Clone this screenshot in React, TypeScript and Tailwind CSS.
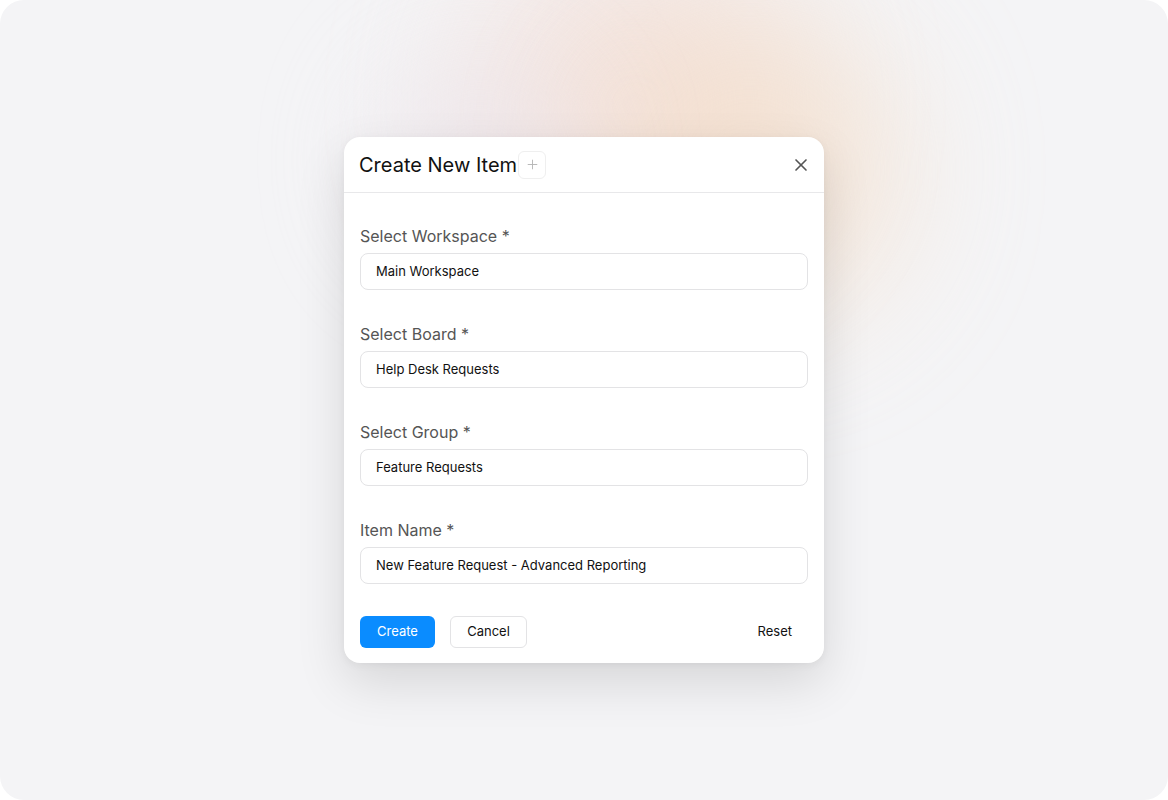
import { Plus, X } from 'lucide-react'

const FIELDS = [
  { label: 'Select Workspace *', value: 'Main Workspace' },
  { label: 'Select Board *', value: 'Help Desk Requests' },
  { label: 'Select Group *', value: 'Feature Requests' },
  { label: 'Item Name *', value: 'New Feature Request - Advanced Reporting' },
] as const

export default function App() {
  return (
    <div className="h-[800px] w-[1168px] bg-white font-['Inter',sans-serif]">
      <div className="relative flex h-full w-full items-start justify-center overflow-hidden rounded-[24px] bg-[#f4f4f6]">
        {/* soft glow behind the dialog */}
        <div className="pointer-events-none absolute left-[470px] top-[-60px] h-[330px] w-[330px] rounded-full bg-[#f3d9cf] opacity-60 blur-[70px]" />
        <div className="pointer-events-none absolute left-[600px] top-[20px] h-[300px] w-[300px] rounded-full bg-[#f4dcc4] opacity-60 blur-[70px]" />
        <div className="pointer-events-none absolute left-[380px] top-[60px] h-[200px] w-[200px] rounded-full bg-[#ebe3ea] opacity-60 blur-[60px]" />

        <div className="relative mt-[137px] w-[480px] rounded-2xl bg-white shadow-[0_20px_50px_rgba(0,0,0,0.12),0_2px_8px_rgba(0,0,0,0.05)]">
          <header className="flex h-[56px] items-center justify-between border-b border-[#e8e8ea] pl-[15px] pr-[11px]">
            <div className="flex items-center gap-[1px]">
              <h2 className="text-[20px] font-normal text-[#111]">Create New Item</h2>
              <span className="flex h-[28px] w-[28px] items-center justify-center rounded-md border border-[#efefef]">
                <Plus className="h-[15px] w-[15px] text-[#b5b5b5]" strokeWidth={1.5} />
              </span>
            </div>
            <button type="button" aria-label="Close" className="flex h-6 w-6 items-center justify-center text-[#555]">
              <X className="h-[20px] w-[20px]" strokeWidth={2} />
            </button>
          </header>

          <div className="px-4 pb-[15px] pt-[31px]">
            {FIELDS.map((field) => (
              <div key={field.label} className="mb-[32px]">
                <label className="mb-[5px] block text-[16px] leading-6 text-[#555]">{field.label}</label>
                <div className="flex h-[37px] items-center rounded-lg border border-[#e3e3e5] px-[15px] text-[13px] text-[#111]">
                  {field.value}
                </div>
              </div>
            ))}

            <div className="flex items-center">
              <button type="button" className="h-8 w-[75px] rounded-md bg-[#0a8cff] text-[13px] text-white">
                Create
              </button>
              <button
                type="button"
                className="ml-[15px] h-8 w-[77px] rounded-md border border-[#e3e3e5] bg-white text-[13px] text-[#111]"
              >
                Cancel
              </button>
              <button type="button" className="ml-auto h-8 px-4 text-[13px] text-[#111]">
                Reset
              </button>
            </div>
          </div>
        </div>
      </div>
    </div>
  )
}
